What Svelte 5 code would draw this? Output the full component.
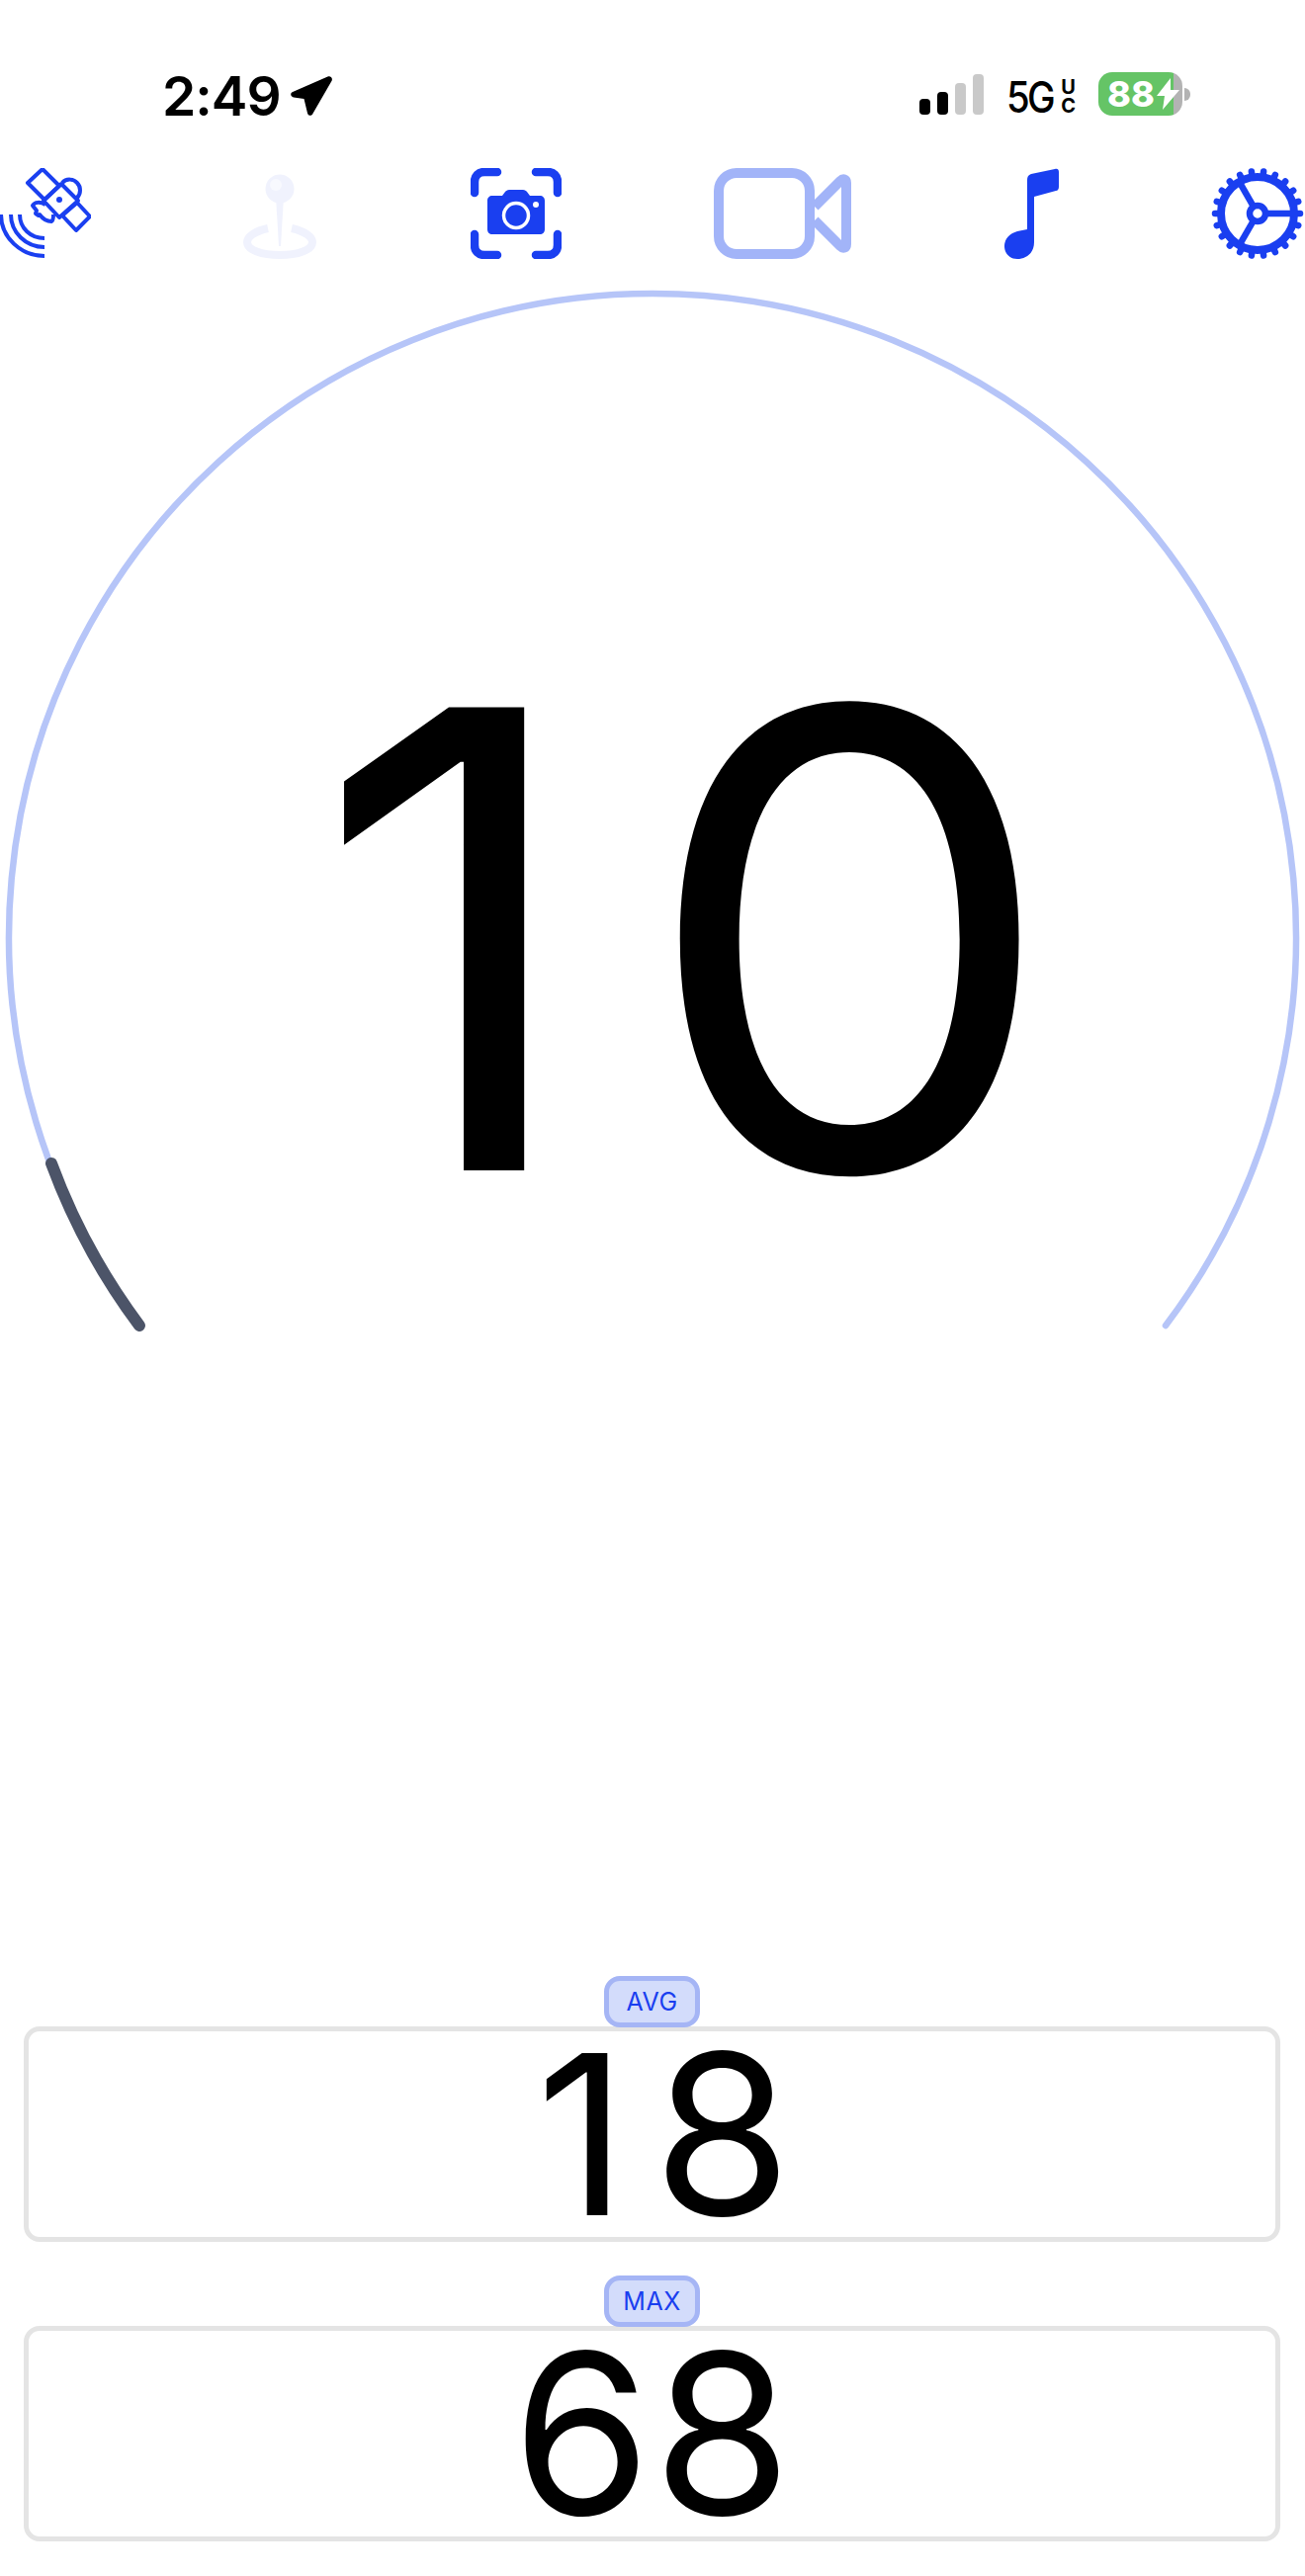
<script lang="ts">
  const blue = '#1a3ff0';

  // gear teeth + spokes are computed around the centre
  const teeth = Array.from({ length: 22 }, (_, i) => (i + 0.5) * (360 / 22));
  const spokes = [0, 120, 240];

  const speed = 10;
  const stats = [
    { label: 'AVG', value: 18 },
    { label: 'MAX', value: 68 }
  ];

  const digits = (n: number) => [...String(n)];
</script>

<div class="page">
  <header class="status">
    <div class="clock">
      <span class="time">2:49</span>
      <svg class="arrow" width="42" height="40" viewBox="0 0 42 40">
        <path d="M37.500 .6 2 16c-2.800 1.200-2.200 5 1 5.400l10.500 1.500 3.500 14.500c.7 3 4.500 3.200 5.500.3L41.700 4.500c.9-2.700-1.500-5-4.200-3.900z" fill="#000" />
      </svg>
    </div>
    <div class="indicators">
      <div class="signal">
        <i class="bar on" style="height: 16px"></i>
        <i class="bar on" style="height: 23px"></i>
        <i class="bar" style="height: 32px"></i>
        <i class="bar" style="height: 41px"></i>
      </div>
      <div class="network">
        <span class="fiveg">5G</span>
        <span class="uc"><b>U</b><b>C</b></span>
      </div>
      <div class="battery">
        <div class="cell">
          <span class="level">88</span>
          <svg class="bolt" width="23" height="32" viewBox="0 0 23 32">
            <path d="M14 0 0 18h8L6 32 23 12h-9z" fill="#fff" />
          </svg>
        </div>
        <i class="knob"></i>
      </div>
    </div>
  </header>

  <nav class="toolbar">
    <!-- satellite -->
    <svg width="92" height="92" viewBox="0 169 92 92" fill="none" stroke={blue} stroke-width="4" stroke-linejoin="round">
      <path d="M43 170 60 187 45 201 28 184z" />
      <path d="M63 217 77 232 91 218 78 204z" />
      <path d="M62 185 79 202 60 219 44 202z" />
      <path d="M63 184c4-5 12-4 15 0 4 4 4 11 0 15" />
      <path d="M46 206c-5-3-11-3-13 1l4 5-1 3 3 2 1-1c3 4 8 7 12 7 2-1 2-5 2-7" />
      <circle cx="60" cy="201" r="3" fill={blue} stroke="none" />
      <path d="M1 216c0 23 20 42 44 42M11 216c0 18 15 33 34 33M20 216c0 14 11 24 25 24" />
    </svg>

    <!-- map pin, disabled -->
    <svg width="75" height="92" viewBox="247 169 75 92" fill="none">
      <path d="M272 230c-14 3-21 9-21 14 0 8 15 13 33 13s33-5 33-13c0-5-7-11-21-14" stroke="#f0f2fd" stroke-width="8" />
      <path d="M280 198h8l-3 50h-2z" fill="#f0f2fd" />
      <circle cx="284" cy="190" r="14.500" fill="#f0f2fd" />
      <circle cx="280" cy="186" r="6" fill="#f8f9fe" />
    </svg>

    <!-- camera in scan frame -->
    <svg width="92" height="92" viewBox="475 169 92 92" fill="none">
      <path d="M479 194v-11c0-6 4-10 10-10h13M541 173h12c6 0 10 4 10 10v11M479 236v11c0 6 4 10 10 10h13M541 257h12c6 0 10-4 10-10v-11" stroke={blue} stroke-width="8.500" stroke-linecap="round" />
      <path d="M497 197h10l3-4c1-1 2-2 4-2h14c2 0 3 1 4 2l3 4h10c3 0 5 2 5 5v29c0 3-2 5-5 5h-48c-3 0-5-2-5-5v-29c0-3 2-5 5-5z" fill={blue} />
      <circle cx="521" cy="217" r="12.500" fill={blue} stroke="#fff" stroke-width="3.500" />
      <circle cx="541" cy="206" r="3" fill="#fff" />
    </svg>

    <!-- video, inactive -->
    <svg width="139" height="92" viewBox="722 169 139 92" fill="none" stroke="#a2b4f8" stroke-width="10" stroke-linejoin="round">
      <rect x="727" y="174" width="92" height="82" rx="18" />
      <path d="M824 208 850 182c3-3 6-2 6 2v62c0 4-3 5-6 2l-26-26" />
    </svg>

    <!-- music note -->
    <svg width="55" height="92" viewBox="1016 169 55 92">
      <path d="M1039 181c0-3 1-5 4-6l24-5c3-1 4 1 4 3v15c0 2-1 4-3 4l-22 6v46c0 12-9 17-17 17-8 0-13-6-13-13 0-8 6-13 13-15l10-2z" fill={blue} />
    </svg>

    <!-- gear -->
    <svg width="95" height="94" viewBox="1225 168 95 94" fill="none" stroke={blue}>
      {#each teeth as a}
        <line x1="1272" y1="215" x2="1272" y2="172" stroke-width="6.500" stroke-linecap="round" transform="rotate({a} 1272 215)" />
      {/each}
      <circle cx="1272" cy="215" r="37" fill="#fff" stroke-width="8" />
      {#each spokes as a}
        <line x1="1272" y1="215" x2="1309" y2="215" stroke-width="6.500" transform="rotate({a} 1272 215)" />
      {/each}
      <circle cx="1272" cy="215" r="8" fill="#fff" stroke-width="6.500" />
    </svg>
  </nav>

  <section class="gauge">
    <svg class="dial" width="1320" height="1080" viewBox="0 280 1320 1080" fill="none" stroke-linecap="round">
      <path d="M141 1341A651 651 0 1 1 1179 1341" stroke="#b6c5f8" stroke-width="6.500" />
      <path d="M52 1177A651 651 0 0 0 141 1341" stroke="#4c5468" stroke-width="12" />
    </svg>
    <div class="speed">
      {#each digits(speed) as d}<span class="digit">{d}</span>{/each}
    </div>
  </section>

  <section class="stats">
    {#each stats as stat}
      <div class="stat">
        <span class="badge">{stat.label}</span>
        <div class="box">
          {#each digits(stat.value) as d}<span class="digit">{d}</span>{/each}
        </div>
      </div>
    {/each}
  </section>
</div>

<style>
  :global(body) {
    margin: 0;
    background: #fff;
  }

  .page {
    width: 1320px;
    height: 2606px;
    display: flex;
    flex-direction: column;
    font-family: Inter, "Liberation Sans", sans-serif;
    color: #000;
    overflow: hidden;
  }

  .status {
    height: 169px;
    box-sizing: border-box;
    padding: 73px 116px 0 164px;
    display: flex;
    justify-content: space-between;
    align-items: flex-start;
  }

  .clock {
    display: flex;
    align-items: center;
    gap: 10px;
    height: 48px;
  }

  .time {
    font-size: 55px;
    font-weight: 600;
    line-height: 48px;
    letter-spacing: -1px;
  }

  .indicators {
    display: flex;
    align-items: flex-start;
  }

  .signal {
    display: flex;
    align-items: flex-end;
    gap: 7px;
    height: 43px;
    margin-right: 16px;
  }

  .bar {
    display: block;
    width: 11px;
    border-radius: 4px;
    background: #c9c9c9;
  }

  .bar.on {
    background: #000;
  }

  .network {
    display: flex;
    gap: 8px;
    height: 44px;
    margin-right: 23px;
    padding-top: 8px;
  }

  .fiveg {
    font-size: 44px;
    line-height: 34px;
    font-weight: 500;
    letter-spacing: -3px;
    transform: scaleX(0.87);
    transform-origin: right center;
  }

  .uc {
    display: flex;
    flex-direction: column;
    gap: 4px;
  }

  .uc b {
    font-size: 20px;
    line-height: 15px;
    font-weight: 700;
  }

  .battery {
    display: flex;
    align-items: center;
    gap: 2px;
  }

  .cell {
    width: 85px;
    height: 44px;
    border-radius: 14px;
    background: linear-gradient(to right, #65c466 90%, #b3b3b3 90%);
    display: flex;
    align-items: center;
    padding-left: 9px;
    box-sizing: border-box;
    gap: 2px;
  }

  .level {
    font-size: 36px;
    font-weight: 800;
    line-height: 44px;
    color: #fff;
  }

  .knob {
    display: block;
    width: 6px;
    height: 13px;
    border-radius: 0 6px 6px 0;
    background: #b3b3b3;
  }

  .toolbar {
    display: flex;
    justify-content: space-between;
    align-items: center;
    height: 93px;
  }

  .toolbar svg {
    display: block;
  }

  .gauge {
    position: relative;
    margin-top: 18px;
  }

  .dial {
    display: block;
  }

  .digit {
    display: inline-block;
    width: 0.63em;
    text-align: center;
  }

  .speed {
    position: absolute;
    left: 0;
    right: 0;
    top: 280px;
    padding-right: 8px;
    box-sizing: border-box;
    text-align: center;
    font-size: 644px;
    line-height: 780px;
    font-weight: 380;
  }

  .speed .digit {
    transform: scaleX(1.04);
  }

  .stats {
    margin-top: auto;
    padding: 0 25px 35px 24px;
    display: flex;
    flex-direction: column;
    gap: 34px;
  }

  .stat {
    display: flex;
    flex-direction: column;
    align-items: center;
  }

  .badge {
    width: 97px;
    height: 52px;
    box-sizing: border-box;
    border: 5px solid #a5b5f5;
    border-radius: 16px;
    background: #d3dcfb;
    color: #1a3ff0;
    font-size: 25px;
    line-height: 43px;
    text-align: center;
    letter-spacing: 0.5px;
    margin-bottom: -1px;
    position: relative;
  }

  .box {
    width: 100%;
    height: 218px;
    box-sizing: border-box;
    border: 5px solid #e4e4e4;
    border-radius: 16px;
    font-size: 226px;
    line-height: 208px;
    text-align: center;
  }
</style>
